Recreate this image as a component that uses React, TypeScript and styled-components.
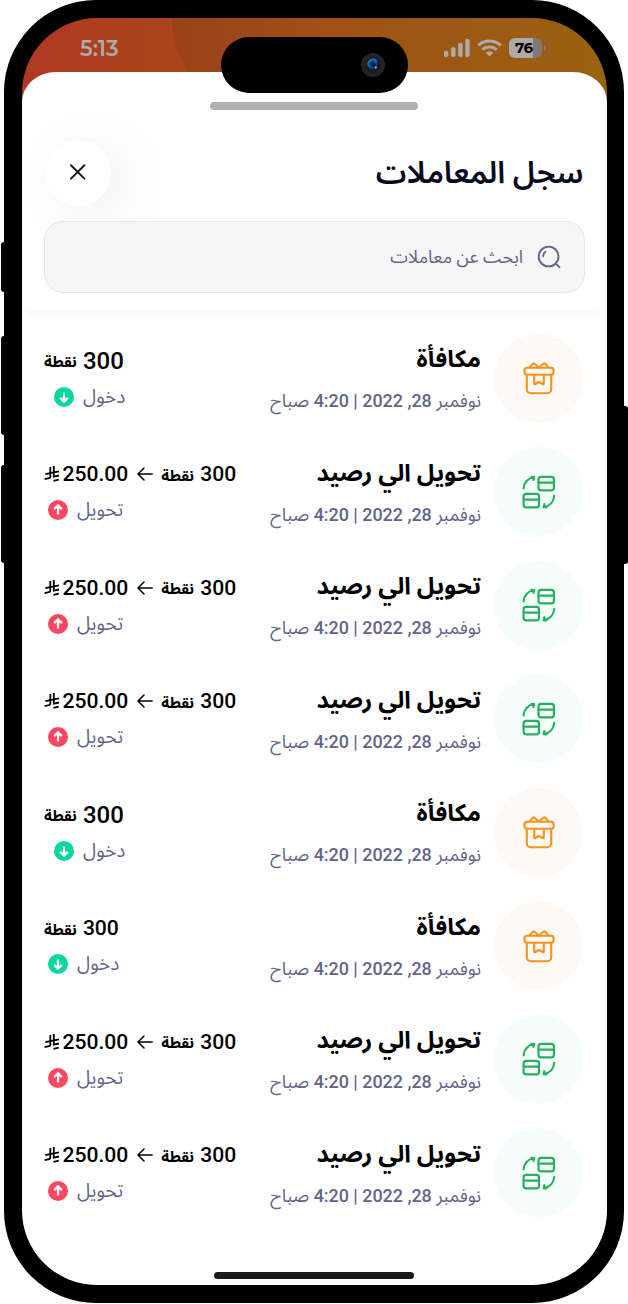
import React from 'react';
import styled, { createGlobalStyle } from 'styled-components';

const GlobalStyle = createGlobalStyle`
  *, *::before, *::after { box-sizing: border-box; }
  html, body { margin: 0; padding: 0; background: #fff; }
`;

const arabic = `Roboto, "Noto Sans Arabic", "Noto Sans", sans-serif`;

const Device = styled.div`
  position: relative;
  width: 628px;
  height: 1304px;
  padding: 0 4px 1px;
  direction: rtl;
  font-family: ${arabic};
`;

const SideKey = styled.div<{ $side: 'left' | 'right'; $top: number; $length: number }>`
  position: absolute;
  ${(p) => p.$side}: 0.5px;
  top: ${(p) => p.$top}px;
  width: 6px;
  height: ${(p) => p.$length}px;
  background: #000;
  border-radius: ${(p) => (p.$side === 'left' ? '3px 0 0 3px' : '0 3px 3px 0')};
`;

const Bezel = styled.div`
  position: relative;
  height: 1303px;
  padding: 17.5px 17.5px 18px 18px;
  background: #000;
  border-radius: 92px;
`;

const Screen = styled.div`
  position: relative;
  display: flex;
  flex-direction: column;
  height: 100%;
  overflow: hidden;
  border-radius: 75px;
  background: linear-gradient(90deg, #b03822 0%, #a8461a 30%, #9e5414 62%, #996211 100%);
`;

const StatusBar = styled.div`
  position: relative;
  display: flex;
  direction: ltr;
  align-items: center;
  justify-content: space-between;
  flex: none;
  height: 54.5px;
  padding: 7px 64.5px 0 58px;
  overflow: hidden;

  &::before {
    content: '';
    position: absolute;
    left: 150px;
    top: -100px;
    width: 200px;
    height: 200px;
    border-radius: 50%;
    background: linear-gradient(90deg, rgba(90, 50, 20, 0.2), transparent 75%);
  }
`;

const Clock = styled.span`
  font: 600 21.8px/24px Montserrat, Inter, sans-serif;
  letter-spacing: -0.1px;
  color: #aeaaa7;
`;

const StatusIcons = styled.div`
  display: flex;
  align-items: center;
  gap: 7px;
  margin-top: -1px;
`;

const Battery = styled.div`
  position: relative;
  width: 33px;
  height: 20px;
  border-radius: 6px;
  background: linear-gradient(90deg, #aeaaa7 0 24px, #7f7b76 24px);
  color: #000;
  font: 700 15px/20px Montserrat, Inter, sans-serif;
  letter-spacing: -0.5px;
  padding-left: 6px;

  &::after {
    content: '';
    position: absolute;
    right: -3.5px;
    top: 7px;
    width: 2px;
    height: 6px;
    border-radius: 0 3px 3px 0;
    background: #7f7b76;
  }
`;

const Island = styled.div`
  position: absolute;
  z-index: 2;
  left: 198.5px;
  top: 19.5px;
  display: flex;
  align-items: center;
  justify-content: flex-start;
  width: 187.5px;
  height: 55.5px;
  padding-right: 23px;
  border-radius: 28px;
  background: #000;
`;

const Sheet = styled.main`
  display: flex;
  flex-direction: column;
  flex: 1;
  background: #fff;
  border-radius: 34px 34px 0 0 / 30px 30px 0 0;
`;

const Header = styled.header`
  display: flex;
  flex-direction: column;
  flex: none;
  height: 237.5px;
  padding: 29.5px 22px 0 21.5px;
  box-shadow: 0 8px 12px -4px rgba(0, 0, 0, 0.035);
  border-radius: 34px 34px 0 0;
`;

const Grabber = styled.div`
  flex: none;
  align-self: center;
  width: 208px;
  height: 8px;
  border-radius: 4px;
  background: #b2b2b2;
`;

const TitleBar = styled.div`
  display: flex;
  align-items: center;
  justify-content: space-between;
  height: 66px;
  margin-top: 30px;
  padding: 0 1px;
`;

const Title = styled.h1`
  margin: 0;
  font-size: 30.7px;
  line-height: 44px;
  font-weight: 600;
  color: #060a1e;
  white-space: nowrap;
`;

const CloseButton = styled.button`
  display: flex;
  align-items: center;
  justify-content: center;
  width: 66px;
  height: 66px;
  padding: 0 0 1px;
  border: 0;
  border-radius: 50%;
  background: #fff;
  box-shadow: 15px 8px 56px rgba(0, 0, 0, 0.07);
`;

const SearchBox = styled.label`
  display: flex;
  align-items: center;
  gap: 13.5px;
  height: 72px;
  margin-top: 15.5px;
  padding: 0 23px;
  border: 1.5px solid #e4e6ea;
  border-radius: 19px;
  background: rgba(245, 245, 245, 0.9);
  color: #62658a;
  font-size: 17.9px;
  line-height: 30px;
`;

const List = styled.ul`
  display: flex;
  flex-direction: column;
  gap: 24.5px;
  flex: 1;
  margin: 0;
  padding: 24px 23.5px 0 22px;
  list-style: none;
`;

const Row = styled.li`
  display: flex;
  align-items: flex-start;
  height: 89px;
`;

const Avatar = styled.div<{ $kind: Kind }>`
  display: flex;
  align-items: center;
  justify-content: center;
  flex: none;
  width: 89px;
  height: 89px;
  border-radius: 50%;
  background: ${(p) => (p.$kind === 'reward' ? '#fff9f5' : '#f4fdfa')};
`;

const Details = styled.div`
  display: flex;
  flex-direction: column;
  flex: 1;
  padding: 5.5px 13px 0 0;
`;

const Name = styled.div`
  height: 40px;
  font-size: 23.9px;
  line-height: 40px;
  font-weight: 700;
  color: #000;
  white-space: nowrap;
`;

const DateLine = styled.div`
  height: 30px;
  margin-top: 7px;
  font-size: 17.9px;
  line-height: 30px;
  color: #62658a;
  white-space: nowrap;
`;

const Digits = styled.span`
  font-weight: 500;
`;

const Amounts = styled.div`
  display: flex;
  flex-direction: column;
  align-items: flex-start;
  direction: ltr;
  flex: none;
  padding-top: 12px;
`;

const AmountLine = styled.div`
  display: flex;
  align-items: center;
  height: 30px;
  color: #000;
`;

const Figure = styled.span<{ $size?: number }>`
  font-size: ${(p) => p.$size ?? 21.1}px;
  line-height: 30px;
  font-weight: 500;
`;

const Unit = styled.span`
  margin: 3px 6px 0 0;
  font-size: 15.2px;
  line-height: 30px;
  font-weight: 700;
`;

const Direction = styled.div<{ $inset: number }>`
  display: flex;
  align-items: center;
  gap: 9px;
  height: 30px;
  margin-top: 6px;
  padding-left: ${(p) => p.$inset}px;
  font-size: 19px;
  line-height: 30px;
  color: #62658a;
`;

const HomeIndicator = styled.div`
  flex: none;
  align-self: center;
  width: 200px;
  height: 7.5px;
  margin-bottom: 6px;
  border-radius: 4px;
  background: #1a1a1a;
`;

type Kind = 'reward' | 'transfer';

const SignalIcon = () => (
  <svg width="26" height="18" viewBox="0 0 26 18" fill="#aeaaa7">
    <rect x="0" y="12" width="4.4" height="6" rx="1.4" />
    <rect x="7.1" y="8.3" width="4.4" height="9.7" rx="1.4" />
    <rect x="14.2" y="4" width="4.4" height="14" rx="1.4" />
    <rect x="21.3" y="0" width="4.4" height="18" rx="1.4" />
  </svg>
);

const WifiIcon = () => (
  <svg width="25" height="18" viewBox="0 0 25 18" fill="none" stroke="#aeaaa7" strokeWidth="3">
    <path d="M1.3 6.5a16 16 0 0 1 22.4 0" />
    <path d="M5.4 10.8a10.2 10.2 0 0 1 14.2 0" />
    <path d="M12.5 17.6 8.6 13.8a5.6 5.6 0 0 1 7.8 0z" fill="#aeaaa7" stroke="none" />
  </svg>
);

const Camera = () => (
  <svg width="24" height="24" viewBox="0 0 24 24">
    <defs>
      <radialGradient id="lens" cx="0.42" cy="0.4" r="0.55">
        <stop offset="0" stopColor="#06264f" />
        <stop offset="0.6" stopColor="#0c58b4" />
        <stop offset="1" stopColor="#071a36" />
      </radialGradient>
    </defs>
    <circle cx="12" cy="12" r="12" fill="#242426" />
    <circle cx="12" cy="12" r="8.2" fill="#1b1c1f" />
    <circle cx="12" cy="11.5" r="5.8" fill="url(#lens)" />
    <path d="M7.5 12.5a4.7 4.7 0 0 1 8-4.5" fill="none" stroke="#1769c4" strokeWidth="2" />
    <circle cx="12.6" cy="12" r="2.2" fill="#04162f" />
    <circle cx="14.8" cy="14.6" r="1" fill="#a9d4ec" />
  </svg>
);

const CloseIcon = () => (
  <svg width="16" height="16" viewBox="0 0 16 16" stroke="#1c1c1c" strokeWidth="2" strokeLinecap="round">
    <path d="M1 1.2 14.4 14.6M14.4 1.2 1 14.6" />
  </svg>
);

const SearchIcon = () => (
  <svg width="24" height="24" viewBox="0 0 24 24" fill="none" stroke="#62658a" strokeWidth="1.9" strokeLinecap="round">
    <circle cx="11.6" cy="11.5" r="9.9" />
    <path d="M6.2 11.2a5.3 5.3 0 0 1 2.2-4.4M19.7 19.5l2.7 2.6" />
  </svg>
);

const GiftIcon = () => (
  <svg width="32" height="34" viewBox="0 0 32 34" fill="none" stroke="#f7941e" strokeWidth="2.1" strokeLinejoin="round" strokeLinecap="round">
    <rect x="1.4" y="6.8" width="29.2" height="7" rx="2.6" />
    <path d="M3.8 13.8v14.4a4 4 0 0 0 4 4h16.4a4 4 0 0 0 4-4V13.8" />
    <path d="M6.5 6.5 9.7 2.9q1-1 2 0L15.900 6.5l4.4-3.700q1-.9 2 0l3.200 3.700" />
    <path d="M11.2 14v8.3q0 1.5 1.3.7l2.3-1.5q1.2-.7 2.4 0l2.3 1.5q1.3.8 1.3-.7V14" />
  </svg>
);

const TransferIcon = () => (
  <svg width="34" height="34" viewBox="0 0 34 34" fill="none" stroke="#27ae60" strokeWidth="2.2" strokeLinejoin="round" strokeLinecap="round">
    <rect x="16.5" y="1.9" width="15.4" height="13.4" rx="2.6" />
    <path d="M16.5 7.6h15.4" />
    <rect x="1.6" y="18.9" width="15.4" height="13.4" rx="2.6" />
    <path d="M1.6 24.6H17" />
    <path d="M1.6 13.4C2 7.5 5.8 3 12.2 2.1M9.5 1.900l2.7.2-.8 2.900" />
    <path d="M32.2 20.8c-.4 5.9-4.2 10.4-10.6 11.3M24.3 32.300l-2.700-.2.8-2.900" />
  </svg>
);

const RiyalIcon = () => (
  <svg width="15.5" height="16" viewBox="0 0 15.5 16" fill="none" stroke="#000" strokeWidth="1.8">
    <path d="M6.3.9v9.600q0 1.400-1.300 1.700L.6 13.200" />
    <path d="M9.8 0v10.6L15 9.500" />
    <path d="M1.300 8.200 15 5.400M9.400 14.900l5.400-1.200" />
  </svg>
);

const ArrowIcon = () => (
  <svg width="16" height="14" viewBox="0 0 16 14" fill="none" stroke="#000" strokeWidth="1.5" strokeLinecap="round" strokeLinejoin="round">
    <path d="M15.2 7H1M7 1 1 7l6 6" />
  </svg>
);

const DirectionIcon = ({ incoming }: { incoming: boolean }) => (
  <svg width="20" height="20" viewBox="0 0 20 20" fill="none">
    <circle cx="10" cy="10" r="10" fill={incoming ? '#06d6a0' : '#ff4560'} />
    <path
      d={incoming ? 'M10 5.4v9M6.2 10.9l3.8 3.700 3.8-3.700' : 'M10 14.600v-9M6.2 9.100 10 5.400l3.8 3.700'}
      stroke="#fff"
      strokeWidth="2.2"
    />
  </svg>
);

const Gap = styled.span<{ $w: number }>`
  flex: none;
  width: ${(p) => p.$w}px;
`;

interface Entry {
  kind: Kind;
  large?: boolean;
}

const entries: Entry[] = [
  { kind: 'reward', large: true },
  { kind: 'transfer' },
  { kind: 'transfer' },
  { kind: 'transfer' },
  { kind: 'reward', large: true },
  { kind: 'reward' },
  { kind: 'transfer' },
  { kind: 'transfer' },
];

const Transaction = ({ kind, large }: Entry) => {
  const reward = kind === 'reward';
  return (
    <Row>
      <Avatar $kind={kind}>{reward ? <GiftIcon /> : <TransferIcon />}</Avatar>
      <Details>
        <Name>{reward ? 'مكافأة' : 'تحويل الي رصيد'}</Name>
        <DateLine>
          نوفمبر <Digits>28, 2022 | 4:20</Digits> صباح
        </DateLine>
      </Details>
      <Amounts>
        <AmountLine>
          {!reward && (
            <>
              <RiyalIcon />
              <Gap $w={3} />
              <Figure>250.00</Figure>
              <Gap $w={8.5} />
              <ArrowIcon />
              <Gap $w={8.5} />
            </>
          )}
          <Unit>نقطة</Unit>
          <Figure $size={large ? 24 : undefined}>300</Figure>
        </AmountLine>
        <Direction $inset={large ? 10 : 4}>
          <DirectionIcon incoming={reward} />
          <span>{reward ? 'دخول' : 'تحويل'}</span>
        </Direction>
      </Amounts>
    </Row>
  );
};

export default function App() {
  return (
    <>
      <GlobalStyle />
      <Device>
        <SideKey $side="left" $top={242} $length={49.5} />
        <SideKey $side="left" $top={336} $length={99} />
        <SideKey $side="left" $top={465} $length={98} />
        <SideKey $side="right" $top={406} $length={158} />
        <Bezel>
          <Screen>
            <StatusBar>
              <Clock>5:13</Clock>
              <StatusIcons>
                <SignalIcon />
                <WifiIcon />
                <Battery>76</Battery>
              </StatusIcons>
            </StatusBar>
            <Island>
              <Camera />
            </Island>
            <Sheet>
              <Header>
                <Grabber />
                <TitleBar>
                  <Title>سجل المعاملات</Title>
                  <CloseButton aria-label="إغلاق">
                    <CloseIcon />
                  </CloseButton>
                </TitleBar>
                <SearchBox>
                  <SearchIcon />
                  <span>ابحث عن معاملات</span>
                </SearchBox>
              </Header>
              <List>
                {entries.map((entry, i) => (
                  <Transaction key={i} {...entry} />
                ))}
              </List>
              <HomeIndicator />
            </Sheet>
          </Screen>
        </Bezel>
      </Device>
    </>
  );
}
